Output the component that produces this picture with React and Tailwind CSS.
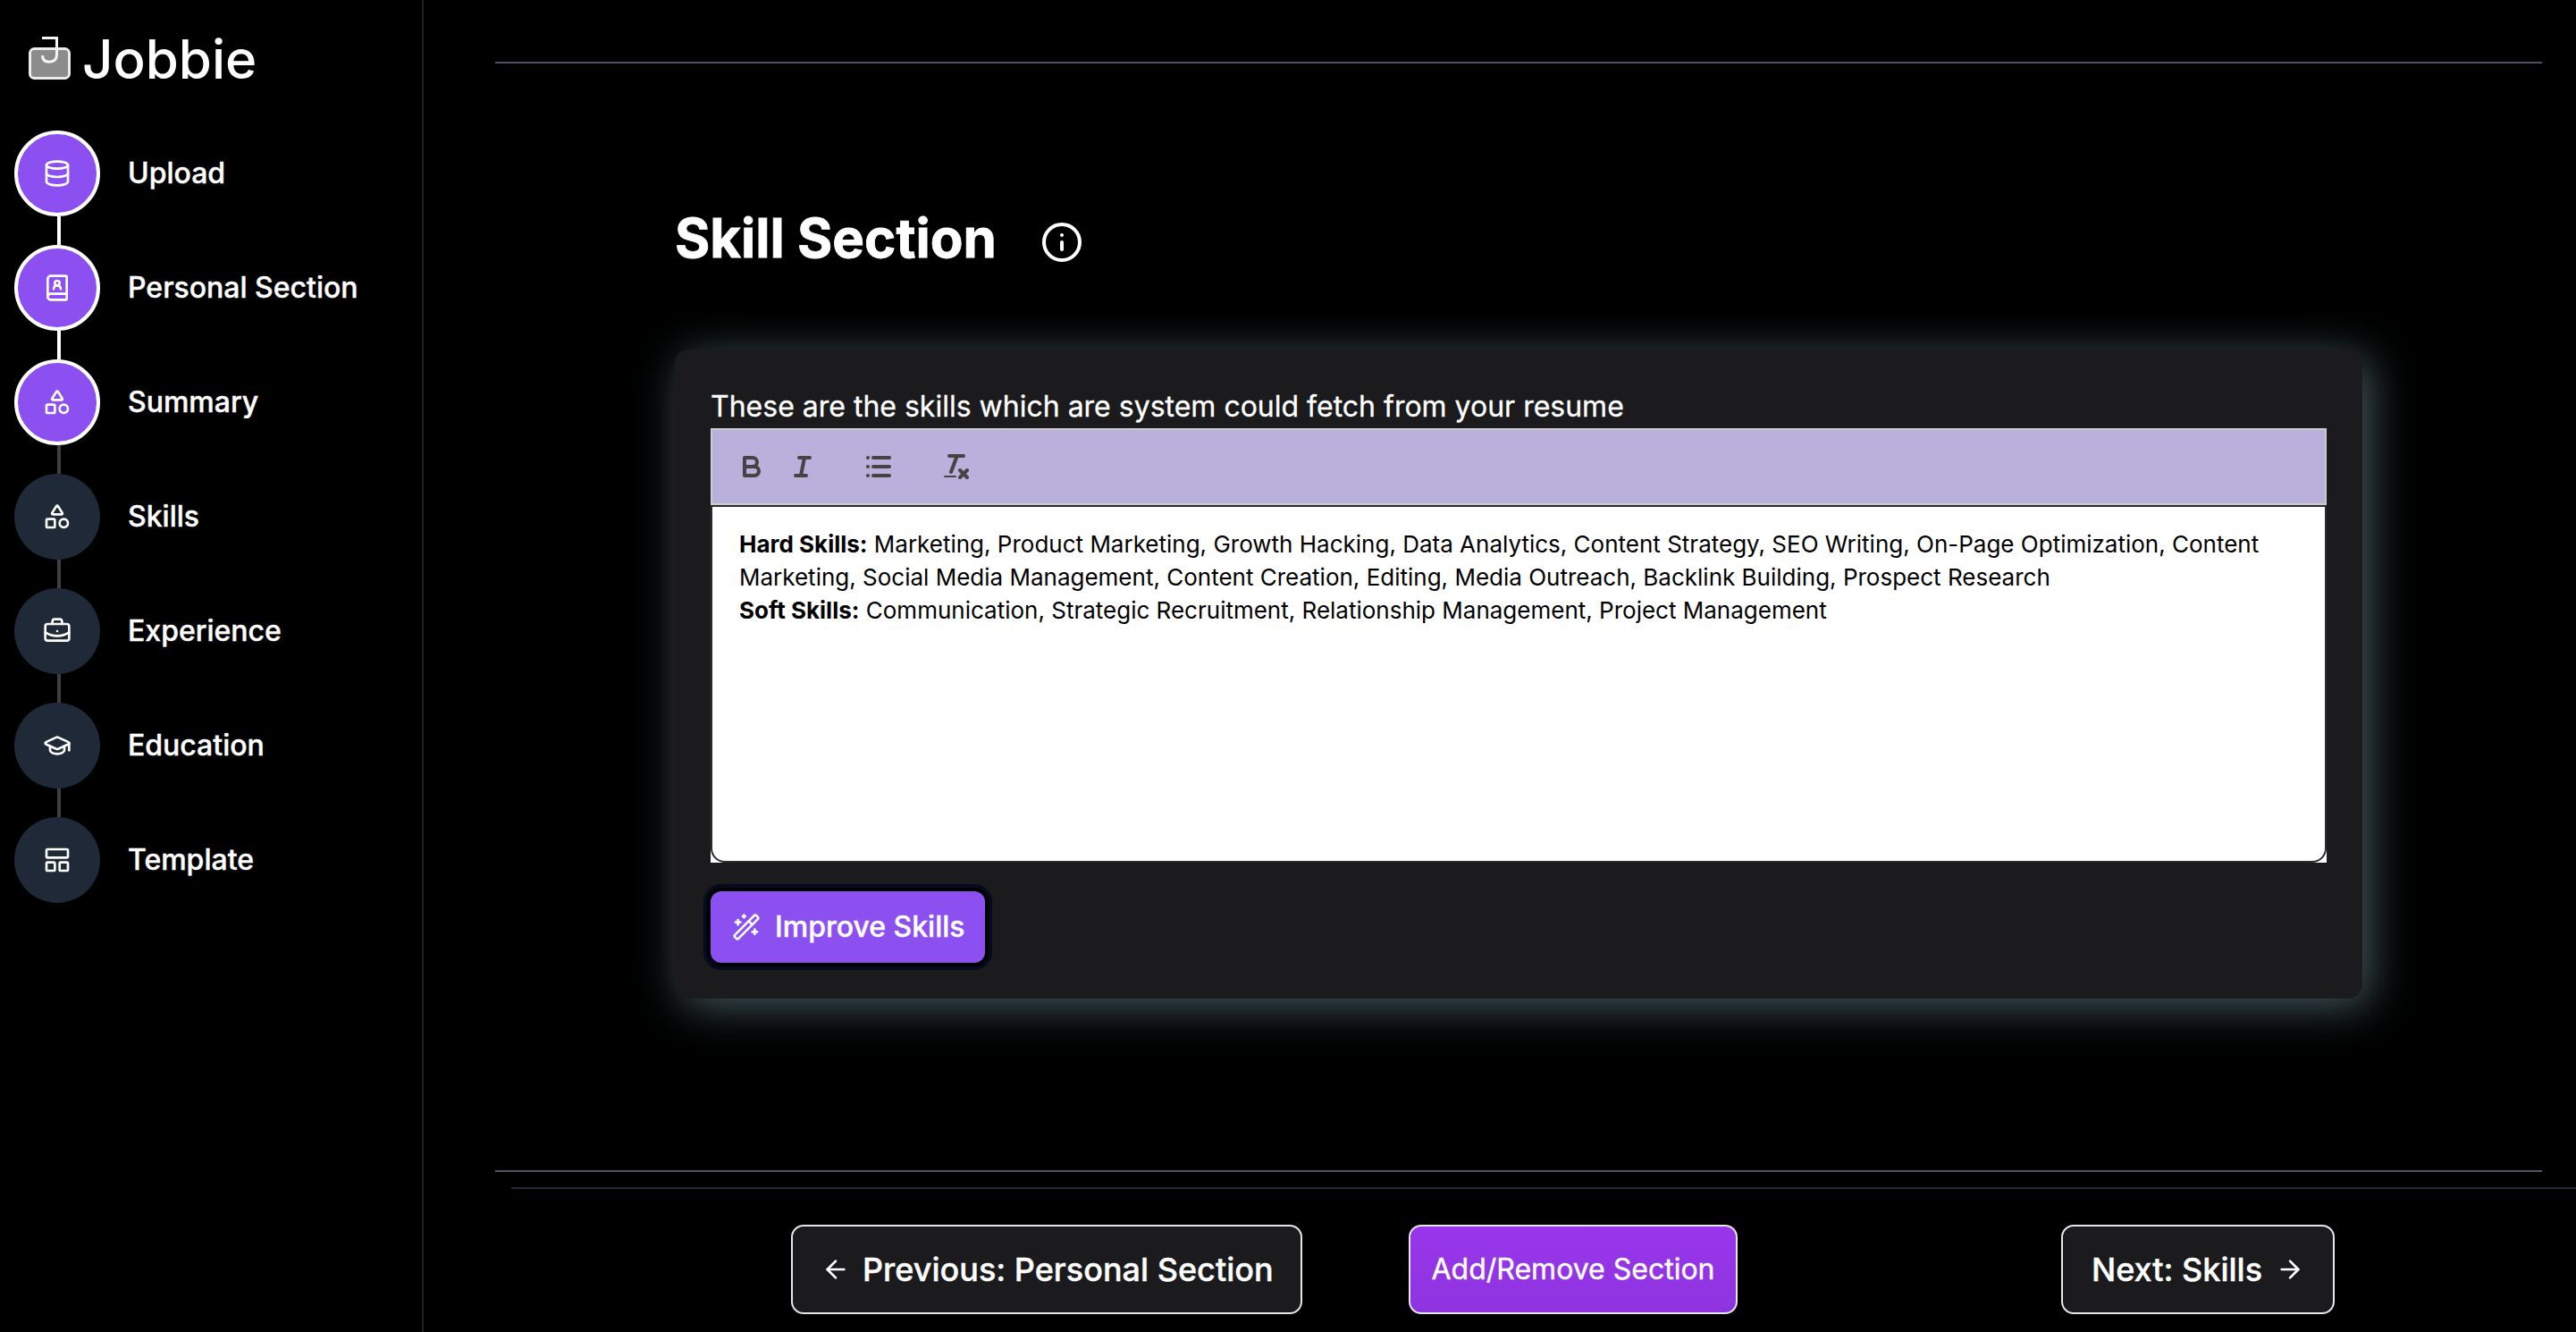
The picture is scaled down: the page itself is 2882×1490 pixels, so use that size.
import React from "react";
import { Database, BookUser, Shapes, BriefcaseBusiness, GraduationCap, LayoutPanelTop, Info, WandSparkles, ArrowLeft, ArrowRight } from "lucide-react";

const steps = [
  { label: "Upload", Icon: Database, done: true, lineDone: true },
  { label: "Personal Section", Icon: BookUser, done: true, lineDone: true },
  { label: "Summary", Icon: Shapes, done: true },
  { label: "Skills", Icon: Shapes },
  { label: "Experience", Icon: BriefcaseBusiness },
  { label: "Education", Icon: GraduationCap },
  { label: "Template", Icon: LayoutPanelTop },
];

function Logo() {
  return (
    <svg width="48" height="50" viewBox="0 0 48 50" className="shrink-0" fill="none">
      <rect x="1.5" y="13.5" width="44" height="33" rx="5" fill="#8c8c8c" stroke="#ebebeb" strokeWidth="3" />
      <path d="M15 1.5H31.5V20Q31.5 28.2 23 28.2Q15.5 28.2 15.5 21" stroke="#f5f5f5" strokeWidth="3" />
    </svg>
  );
}

function Sidebar() {
  return (
    <aside className="w-[474px] shrink-0 border-r-2 border-[#1f2023] pt-[39px] pl-[16px]">
      <div className="flex items-center gap-[12px] pl-[16px] h-[54px]">
        <Logo />
        <span className="text-[60px] leading-none font-[450] text-white">Jobbie</span>
      </div>
      <div className="mt-[53px] flex flex-col">
        {steps.map((s, i) => (
          <div key={s.label} className="flex items-start">
            <div className="w-[96px] shrink-0 flex flex-col">
              <div className={s.done ? "w-[96px] h-[96px] rounded-full bg-[#8b50ef] border-4 border-white flex items-center justify-center text-white" : "w-[96px] h-[96px] rounded-full bg-[#1f2937] flex items-center justify-center text-white"}>
                <s.Icon size={32} />
              </div>
              {i < steps.length - 1 && <div className={s.lineDone ? "w-[4px] h-[32px] ml-[48px] bg-white" : "w-[4px] h-[32px] ml-[48px] bg-[#3f3f42]"} />}
            </div>
            <div className="ml-[31px] h-[96px] flex items-center text-[32px] font-medium text-white [-webkit-text-stroke:0.4px_white]">{s.label}</div>
          </div>
        ))}
      </div>
    </aside>
  );
}

function Toolbar() {
  const stroke = { stroke: "#444", strokeWidth: 2, strokeLinecap: "round", strokeLinejoin: "round", fill: "none" };
  return (
    <div className="h-[86px] bg-[#b9b0db] border-2 border-[#cccccc] flex items-center pl-[26px]">
      <svg width="36" height="36" viewBox="0 0 18 18" {...stroke}>
        <path d="M5,4H9.5A2.5,2.5,0,0,1,12,6.5v0A2.5,2.5,0,0,1,9.5,9H5A0,0,0,0,1,5,9V4A0,0,0,0,1,5,4Z" />
        <path d="M5,9h5.5A2.5,2.5,0,0,1,13,11.5v0A2.5,2.5,0,0,1,10.5,14H5a0,0,0,0,1,0,0V9A0,0,0,0,1,5,9Z" />
      </svg>
      <svg width="36" height="36" viewBox="0 0 18 18" {...stroke} className="ml-[21px]">
        <line x1="7" x2="13" y1="4" y2="4" />
        <line x1="5" x2="11" y1="14" y2="14" />
        <line x1="8" x2="10" y1="14" y2="4" />
      </svg>
      <svg width="36" height="36" viewBox="0 0 18 18" {...stroke} className="ml-[49px]">
        <line x1="6" x2="15" y1="4" y2="4" />
        <line x1="6" x2="15" y1="9" y2="9" />
        <line x1="6" x2="15" y1="14" y2="14" />
        <line x1="3" x2="3" y1="4" y2="4" />
        <line x1="3" x2="3" y1="9" y2="9" />
        <line x1="3" x2="3" y1="14" y2="14" />
      </svg>
      <svg width="36" height="36" viewBox="0 0 18 18" {...stroke} className="ml-[51px]">
        <line x1="5" x2="13" y1="3" y2="3" />
        <line x1="6" x2="9.35" y1="12" y2="3" />
        <line x1="11" x2="15" y1="11" y2="15" />
        <line x1="15" x2="11" y1="11" y2="15" />
        <rect height="1" rx="0.5" ry="0.5" width="7" x="2" y="14" fill="#444" stroke="none" />
      </svg>
    </div>
  );
}

function Main() {
  return (
    <main className="flex-1 min-w-0 flex flex-col pt-[69px]">
      <div className="h-[2px] bg-[#4b5563] ml-[80px] mr-[38px]" />
      <div className="mt-[159px] ml-[281px] flex items-center h-[72px]">
        <h1 className="text-[60px] leading-[72px] font-bold text-white [-webkit-text-stroke:0.8px_white]">Skill Section</h1>
        <Info size={48} className="text-white ml-[49px] mt-[10px]" />
      </div>
      <div className="mt-[89px] ml-[281px] w-[1888px] h-[726px] rounded-[16px] bg-[#1b1b1d] p-[40px] shadow-[8px_8px_50px_#475a60]">
        <p className="text-[32px] leading-[48px] text-white [-webkit-text-stroke:0.3px_white]">These are the skills which are system could fetch from your resume</p>
        <Toolbar />
        <div className="bg-white">
          <div className="h-[400px] border-2 border-[#2d2a2e] rounded-b-[16px] bg-white px-[30px] py-[24px] text-[26px] leading-[36.92px] text-black">
            <p><strong>Hard Skills:</strong> Marketing, Product Marketing, Growth Hacking, Data Analytics, Content Strategy, SEO Writing, On-Page Optimization, Content Marketing, Social Media Management, Content Creation, Editing, Media Outreach, Backlink Building, Prospect Research</p>
            <p><strong>Soft Skills:</strong> Communication, Strategic Recruitment, Relationship Management, Project Management</p>
          </div>
        </div>
        <button className="mt-[32px] h-[80px] w-[307px] rounded-[12px] bg-[#8b50ef] pl-[24px] flex items-center gap-[16px] text-[32px] font-medium text-white [-webkit-text-stroke:0.4px_white] shadow-[0_0_0_4px_#000,0_0_0_8px_#050a1c]">
          <WandSparkles size={32} />
          Improve Skills
        </button>
      </div>
      <div className="mt-[192px] h-[2px] bg-[#4b5563] ml-[80px] mr-[38px]" />
      <div className="mt-[17px] h-[2px] bg-[#1f2937] ml-[98px]" />
      <div className="mt-[40px] flex ml-[411px]">
        <button className="w-[572px] h-[100px] rounded-[14px] border-2 border-[#e5e7eb] bg-[#1b1b1d] pl-[32px] flex items-center gap-[14px] text-[36px] font-medium text-white [-webkit-text-stroke:0.4px_white]">
          <ArrowLeft size={32} />
          Previous: Personal Section
        </button>
        <button className="ml-[119px] w-[368px] h-[100px] rounded-[14px] border-2 border-[#e5e7eb] bg-gradient-to-b from-[#9736ea] to-[#8f33e0] flex items-center justify-center text-[32px] font-normal text-white [-webkit-text-stroke:0.4px_white]">
          Add/Remove Section
        </button>
        <button className="ml-[362px] w-[306px] h-[100px] rounded-[14px] border-2 border-[#e5e7eb] bg-[#1b1b1d] pl-[32px] flex items-center gap-[15px] text-[36px] font-medium text-white [-webkit-text-stroke:0.4px_white]">
          Next: Skills
          <ArrowRight size={32} />
        </button>
      </div>
    </main>
  );
}

export default function App() {
  return (
    <div className="flex w-[2882px] h-[1490px] overflow-hidden bg-black font-['Inter',sans-serif]">
      <Sidebar />
      <Main />
    </div>
  );
}
